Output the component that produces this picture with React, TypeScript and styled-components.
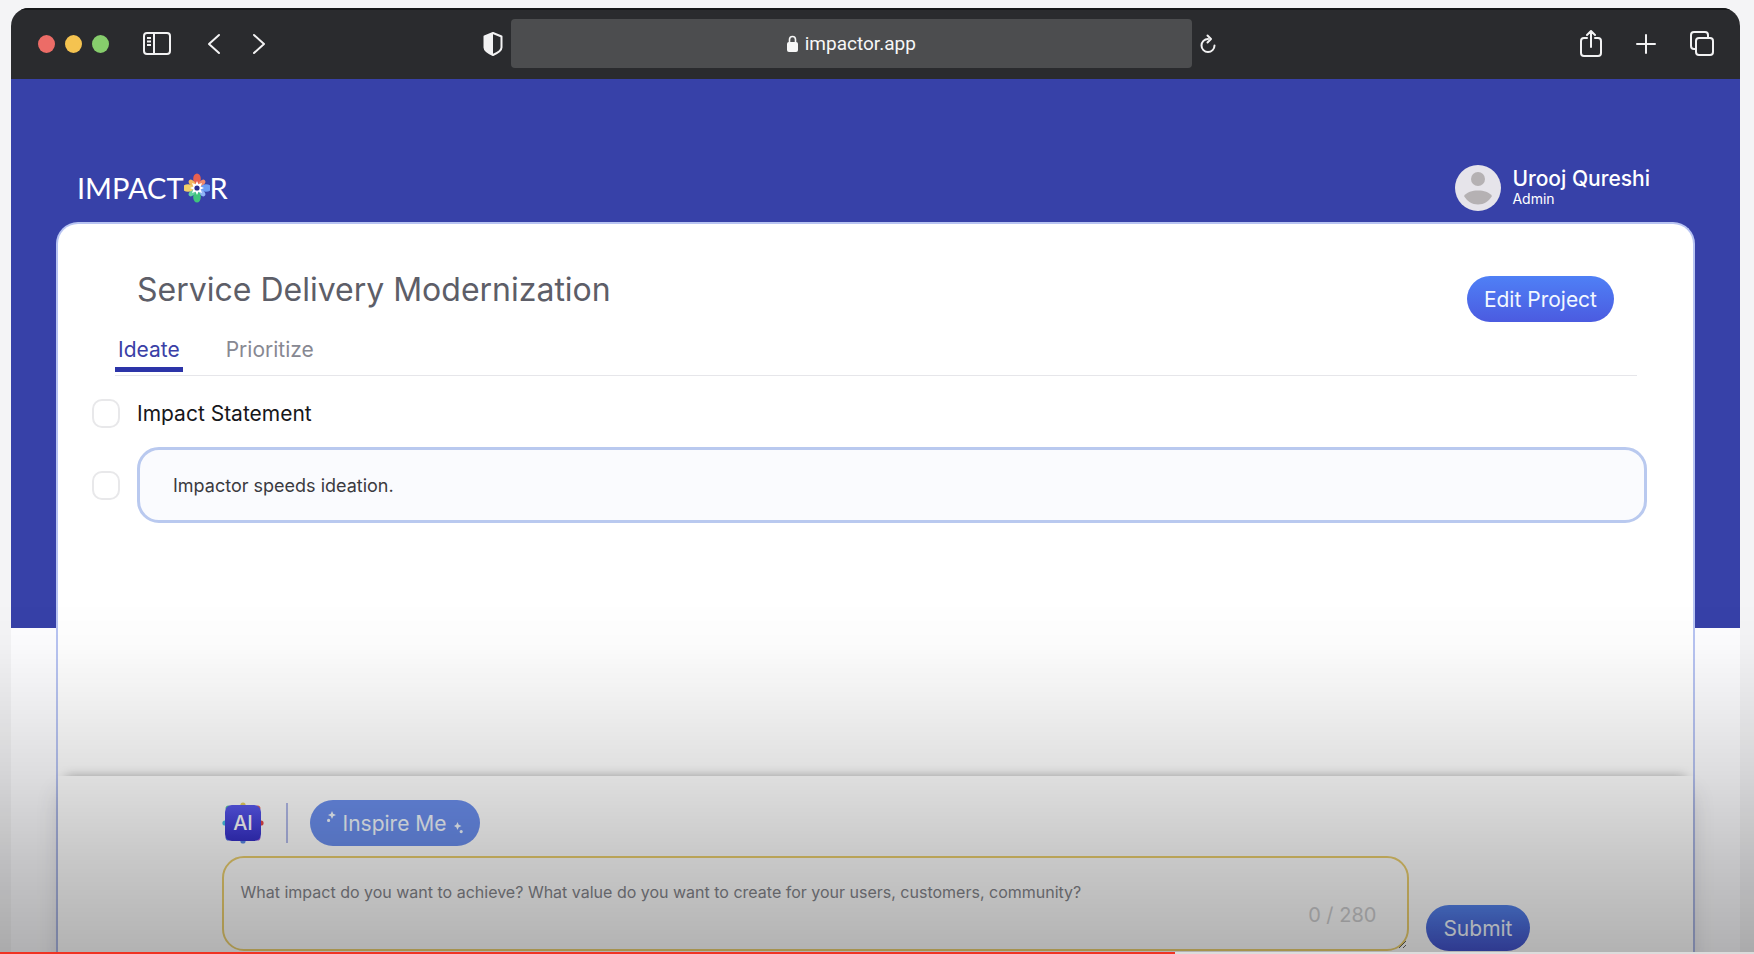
import React from "react";
import styled, { createGlobalStyle, css } from "styled-components";

const GlobalStyle = createGlobalStyle`
  *, *::before, *::after { box-sizing: border-box; }
  body { margin: 0; background: #f4f4f6; font-family: Inter, "Liberation Sans", sans-serif; }
  button, input, textarea { font: inherit; }
  h1, h2, p { margin: 0; font-weight: 400; }
`;

const Page = styled.div`
  display: flex;
  flex-direction: column;
  min-height: 100vh;
  padding: 8px 14px 0 11px;
`;

const BrowserWindow = styled.div`
  display: flex;
  flex: 1;
  flex-direction: column;
  overflow: hidden;
  border-radius: 18px 18px 0 0;
`;

const Toolbar = styled.header`
  display: grid;
  grid-template-columns: 9fr 14fr 10fr;
  align-items: center;
  height: 71px;
  background: #2a2b2e;
  box-shadow: inset 0 2px #17181a;
  color: #f2f2f3;
`;

const ToolGroup = styled.div<{ $gap: number; $end?: boolean }>`
  display: flex;
  align-items: center;
  gap: ${(p) => p.$gap}px;
  ${(p) => (p.$end ? css`justify-content: flex-end; padding-right: 26px;` : "")}
`;

const LeftTools = styled(ToolGroup)`
  padding-left: 27px;
`;

const Lights = styled.div`
  display: flex;
  gap: 10px;
`;

const Light = styled.span<{ $color: string }>`
  width: 17px;
  height: 18px;
  border-radius: 50%;
  background: ${(p) => p.$color};
`;

const IconButton = styled.button`
  display: flex;
  padding: 0;
  border: 0;
  background: none;
  color: inherit;
  cursor: pointer;
`;

const AddressBar = styled.a`
  display: flex;
  flex: 1;
  align-items: center;
  justify-content: center;
  gap: 7px;
  height: 49px;
  border-radius: 4px;
  background: #4c4d4f;
  color: #f7f7f7;
  font-family: Roboto, "Liberation Sans", sans-serif;
  font-size: 19px;
  text-decoration: none;
`;

const Site = styled.div`
  display: flex;
  flex: 1;
  flex-direction: column;
  padding: 0 45px;
  background: linear-gradient(#3741a8 549px, #fdfdff 549px);
`;

const SiteHeader = styled.div`
  display: flex;
  align-items: center;
  justify-content: space-between;
  height: 143px;
  padding: 75px 45px 0 21px;
  color: #ffffff;
`;

const Logo = styled.a`
  display: flex;
  align-items: center;
  color: inherit;
  font-family: Lato, "Liberation Sans", sans-serif;
  font-size: 29px;
  line-height: 32px;
  text-decoration: none;
`;

const User = styled.div`
  display: flex;
  align-items: center;
  gap: 11px;
`;

const UserName = styled.p`
  font-size: 21px;
  font-weight: 500;
  line-height: 22px;
`;

const UserRole = styled.p`
  font-size: 14px;
  line-height: 18px;
`;

const Card = styled.main`
  display: flex;
  flex: 1;
  flex-direction: column;
  border: 2px solid #b8c4f2;
  border-bottom: 0;
  border-radius: 22px 22px 0 0;
  background: #ffffff;
`;

const Content = styled.section`
  display: flex;
  flex: 1;
  flex-direction: column;
  padding: 50px 46px 32px 34px;
`;

const TitleRow = styled.div`
  display: flex;
  align-items: center;
  justify-content: space-between;
  padding: 0 33px 0 45px;
`;

const Title = styled.h1`
  padding-bottom: 18px;
  color: #5d5e68;
  font-size: 32px;
  line-height: 32px;
`;

const PillButton = styled.button<{ $tone: "bright" | "flat" | "deep" }>`
  display: flex;
  align-items: center;
  gap: 7px;
  height: 46px;
  padding: 0 17px;
  border: 0;
  border-radius: 23px;
  background: ${(p) =>
    ({
      bright: "linear-gradient(#4f80f6, #4b5be0)",
      flat: "#6b8fee",
      deep: "linear-gradient(#5585ee, #4453cc)",
    })[p.$tone]};
  color: #f2f8ff;
  font-size: 21px;
  cursor: pointer;
`;

const Tabs = styled.nav`
  display: flex;
  gap: 40px;
  margin: 12px 10px 0 23px;
  padding-bottom: 3px;
  border-bottom: 1px solid #e6e6ea;
`;

const Tab = styled.a<{ $active?: boolean }>`
  padding: 0 3px 3px;
  border-bottom: 5px solid ${(p) => (p.$active ? "#2c34a8" : "transparent")};
  color: ${(p) => (p.$active ? "#3a40a6" : "#878892")};
  font-size: 21px;
  line-height: 28px;
  text-decoration: none;
`;

const Row = styled.div<{ $height: number }>`
  display: flex;
  align-items: center;
  gap: 17px;
  height: ${(p) => p.$height}px;
`;

const Rows = styled.div`
  display: flex;
  flex-direction: column;
  gap: 14px;
  padding-top: 17px;
`;

const CheckBox = styled.input`
  appearance: none;
  flex: none;
  width: 28px;
  height: 29px;
  margin: 0;
  border: 2px solid #e8e8ea;
  border-radius: 10px;
  background: #ffffff;
`;

const GroupLabel = styled.label`
  color: #17171a;
  font-size: 21px;
`;

const Statement = styled.input`
  flex: 1;
  min-width: 0;
  height: 76px;
  padding: 0 33px;
  border: 3px solid #b9c9ef;
  border-radius: 22px;
  background: #fafbfe;
  color: #3a3a40;
  font-size: 18px;
`;

const Composer = styled.form`
  display: flex;
  flex-direction: column;
  gap: 10px;
  padding: 24px 10% 3px;
  background: #ffffff;
  box-shadow: 0 -8px 10px -8px rgba(0, 0, 0, 0.28), 0 16px 20px rgba(60, 60, 90, 0.18);
`;

const ComposerRow = styled.div<{ $bottom?: boolean }>`
  display: flex;
  align-items: ${(p) => (p.$bottom ? "flex-end" : "center")};
  gap: ${(p) => (p.$bottom ? 17 : 22)}px;
`;

const Separator = styled.span`
  width: 2px;
  height: 40px;
  background: #b3bbea;
`;

const Prompt = styled.div`
  position: relative;
  display: flex;
  flex: 1;
`;

const PromptBox = styled.textarea`
  flex: 1;
  height: 95px;
  padding: 22px 17px;
  border: 2px solid #ecd070;
  border-radius: 22px;
  background: transparent;
  color: #55565c;
  font-size: 16px;
  line-height: 24px;
  resize: vertical;
  &::placeholder { color: #85868c; opacity: 1; }
`;

const Counter = styled.span`
  position: absolute;
  right: 33px;
  bottom: 24px;
  color: #cfcfd1;
  font-size: 20px;
  line-height: 24px;
`;

const Shade = styled.div`
  position: fixed;
  inset: auto 0 0;
  height: 354px;
  background: linear-gradient(
    rgba(0, 0, 0, 0),
    rgba(0, 0, 0, 0.01) 12%,
    rgba(0, 0, 0, 0.06) 28%,
    rgba(0, 0, 0, 0.13) 50%,
    rgba(0, 0, 0, 0.22) 74%,
    rgba(0, 0, 0, 0.3)
  );
  pointer-events: none;
`;

const Progress = styled.div`
  position: fixed;
  inset: auto 0 0;
  height: 2px;
  background: linear-gradient(90deg, #f03323 67%, #dcdcdc 67%);
`;

const SidebarIcon = () => (
  <svg width="28" height="24" viewBox="0 0 28 24" fill="none" stroke="currentColor" strokeWidth="2">
    <rect x="1" y="1" width="26" height="21" rx="3" />
    <path d="M11 1v21M4 6h4M4 9.500h4M4 13h4" />
  </svg>
);

const Chevron = ({ flip }: { flip?: boolean }) => (
  <svg width="14" height="22" viewBox="0 0 14 22" fill="none" stroke="currentColor" strokeWidth="2" strokeLinecap="round" strokeLinejoin="round">
    <path d={flip ? "M2 2l10 9L2 20" : "M12 2L2 11l10 9"} />
  </svg>
);

const ShieldIcon = () => (
  <svg width="20" height="24" viewBox="0 0 20 24">
    <path d="M10 1l8.500 3.500v11c0 3-4 5.500-8.500 7.500-4.500-2-8.500-4.500-8.500-7.500v-11z" fill="none" stroke="currentColor" strokeWidth="2" strokeLinejoin="round" />
    <path d="M10 1v22c-4.500-2-8.500-4.500-8.500-7.500v-11z" fill="currentColor" />
  </svg>
);

const LockIcon = () => (
  <svg width="11" height="17" viewBox="0 0 11 17">
    <rect y="7" width="11" height="10" rx="2" fill="currentColor" />
    <path d="M2.500 8V4.500a3 3 0 016 0V8" fill="none" stroke="currentColor" strokeWidth="1.600" />
  </svg>
);

const ReloadIcon = () => (
  <svg width="16" height="20" viewBox="0 0 16 20" fill="none" stroke="currentColor" strokeWidth="2" strokeLinecap="round" strokeLinejoin="round">
    <path d="M8 5a6.500 6.500 0 106.500 6.500M7.500 1.500L11 5 7.500 8.500" />
  </svg>
);

const ShareIcon = () => (
  <svg width="22" height="28" viewBox="0 0 22 28" fill="none" stroke="currentColor" strokeWidth="2" strokeLinecap="round" strokeLinejoin="round">
    <path d="M7 8H4a3 3 0 00-3 3v12a3 3 0 003 3h14a3 3 0 003-3V11a3 3 0 00-3-3h-3M11 17V1M7 5l4-4 4 4" />
  </svg>
);

const PlusIcon = () => (
  <svg width="20" height="20" viewBox="0 0 20 20" stroke="currentColor" strokeWidth="2" strokeLinecap="round">
    <path d="M10 1v18M1 10h18" />
  </svg>
);

const CopiesIcon = () => (
  <svg width="24" height="26" viewBox="0 0 24 26" fill="none" stroke="currentColor" strokeWidth="2">
    <rect x="6" y="7" width="17" height="17" rx="3" />
    <path d="M6 18H4a3 3 0 01-3-3V4a3 3 0 013-3h11a3 3 0 013 3v3" />
  </svg>
);

const petals = ["#e8604f", "#f08a6c", "#6b9cf5", "#8fb4f8", "#3fc47c", "#5fd0a0", "#f2cf6a", "#f3b95f"];

const Flower = () => (
  <svg width="26" height="30" viewBox="-13 -15 26 30">
    {petals.map((color, i) => (
      <ellipse key={color} cx="0" cy={i % 2 ? -7 : -9} rx={i % 2 ? 2.5 : 3.8} ry={i % 2 ? 4 : 5.5} fill={color} transform={`rotate(${i * 45})`} />
    ))}
    <path d="M0-7l1.500 3.300L5-5 3.700-1.500 7 0 3.700 1.500 5 5 1.500 3.700 0 7l-1.500-3.300L-5 5l1.300-3.500L-7 0l3.300-1.500L-5-5l3.500 1.300z" fill="#fff" />
    <circle r="2.600" fill="#2b2f8f" />
  </svg>
);

const Avatar = () => (
  <svg width="46" height="46" viewBox="0 0 46 46">
    <circle cx="23" cy="23" r="23" fill="#e6e4ea" />
    <circle cx="23" cy="14" r="7" fill="#b5b1b3" />
    <path d="M9 31c3-4 8-5.500 14-5.500S34 27 37 31c-3 5-8 8.500-14 8.500S12 36 9 31z" fill="#b5b1b3" />
  </svg>
);

const badgeDots = ["#e8d060", "#f06a5a", "#e8484a", "#9a5ae0", "#5a8ae8", "#4a6ae8", "#4ac4e8", "#5ad0a0"];

const AiBadge = () => (
  <svg width="42" height="42" viewBox="-21 -21 42 42" role="img" aria-label="AI">
    <defs>
      <linearGradient id="badge" x1="0" y1="0" x2="0" y2="1">
        <stop offset="0" stopColor="#5a5af0" />
        <stop offset="1" stopColor="#3630c8" />
      </linearGradient>
    </defs>
    {badgeDots.map((color, i) => (
      <circle key={color} cy={i % 2 ? -21 : -18} r="2.600" fill={color} transform={`rotate(${i * 45})`} />
    ))}
    <rect x="-18" y="-18" width="36" height="36" rx="7" fill="url(#badge)" />
    <text y="7" textAnchor="middle" fontSize="20" fontWeight="500" fill="#fff">AI</text>
  </svg>
);

const Sparkle = ({ flip }: { flip?: boolean }) => (
  <svg width="9" height="26" viewBox="0 0 9 26" fill="currentColor">
    {flip ? (
      <path d="M3.500 12l1.200 2.800 2.800 1.200-2.800 1.200-1.200 2.800-1.200-2.800L0 16l2.300-1.200zM7.200 20a1.600 1.600 0 110 3.200 1.600 1.600 0 010-3.200z" />
    ) : (
      <path d="M5 1l1.200 2.800L9 5 6.200 6.200 5 9 3.800 6.200 1 5l2.800-1.200zM1.600 8.800a1.600 1.600 0 110 3.200 1.600 1.600 0 010-3.200z" />
    )}
  </svg>
);

export default function App() {
  return (
    <>
      <GlobalStyle />
      <Page>
        <BrowserWindow>
          <Toolbar>
            <LeftTools $gap={34}>
              <Lights>
                <Light $color="#ec6c67" />
                <Light $color="#f5c350" />
                <Light $color="#86cd6c" />
              </Lights>
              <ToolGroup $gap={36}>
                <IconButton aria-label="Sidebar"><SidebarIcon /></IconButton>
                <ToolGroup $gap={31}>
                  <IconButton aria-label="Back"><Chevron /></IconButton>
                  <IconButton aria-label="Forward"><Chevron flip /></IconButton>
                </ToolGroup>
              </ToolGroup>
            </LeftTools>
            <ToolGroup $gap={8}>
              <IconButton aria-label="Privacy"><ShieldIcon /></IconButton>
              <AddressBar href="#"><LockIcon />impactor.app</AddressBar>
              <IconButton aria-label="Reload"><ReloadIcon /></IconButton>
            </ToolGroup>
            <ToolGroup $gap={34} $end>
              <IconButton aria-label="Share"><ShareIcon /></IconButton>
              <IconButton aria-label="New tab"><PlusIcon /></IconButton>
              <IconButton aria-label="Tab overview"><CopiesIcon /></IconButton>
            </ToolGroup>
          </Toolbar>
          <Site>
            <SiteHeader>
              <Logo href="#"><span>IMPACT</span><Flower /><span>R</span></Logo>
              <User>
                <Avatar />
                <div>
                  <UserName>Urooj Qureshi</UserName>
                  <UserRole>Admin</UserRole>
                </div>
              </User>
            </SiteHeader>
            <Card>
              <Content>
                <TitleRow>
                  <Title>Service Delivery Modernization</Title>
                  <PillButton type="button" $tone="bright">Edit Project</PillButton>
                </TitleRow>
                <Tabs>
                  <Tab href="#" $active>Ideate</Tab>
                  <Tab href="#">Prioritize</Tab>
                </Tabs>
                <Rows>
                  <Row $height={40}>
                    <CheckBox type="checkbox" id="all" />
                    <GroupLabel htmlFor="all">Impact Statement</GroupLabel>
                  </Row>
                  <Row $height={76}>
                    <CheckBox type="checkbox" aria-label="Select statement" />
                    <Statement aria-label="Impact statement" defaultValue="Impactor speeds ideation." />
                  </Row>
                </Rows>
              </Content>
              <Composer>
                <ComposerRow>
                  <AiBadge />
                  <Separator />
                  <PillButton type="button" $tone="flat"><Sparkle />Inspire Me<Sparkle flip /></PillButton>
                </ComposerRow>
                <ComposerRow $bottom>
                  <Prompt>
                    <PromptBox aria-label="Impact" maxLength={280} placeholder="What impact do you want to achieve? What value do you want to create for your users, customers, community?" />
                    <Counter>0 / 280</Counter>
                  </Prompt>
                  <PillButton type="button" $tone="deep">Submit</PillButton>
                </ComposerRow>
              </Composer>
            </Card>
          </Site>
        </BrowserWindow>
      </Page>
      <Shade />
      <Progress />
    </>
  );
}
